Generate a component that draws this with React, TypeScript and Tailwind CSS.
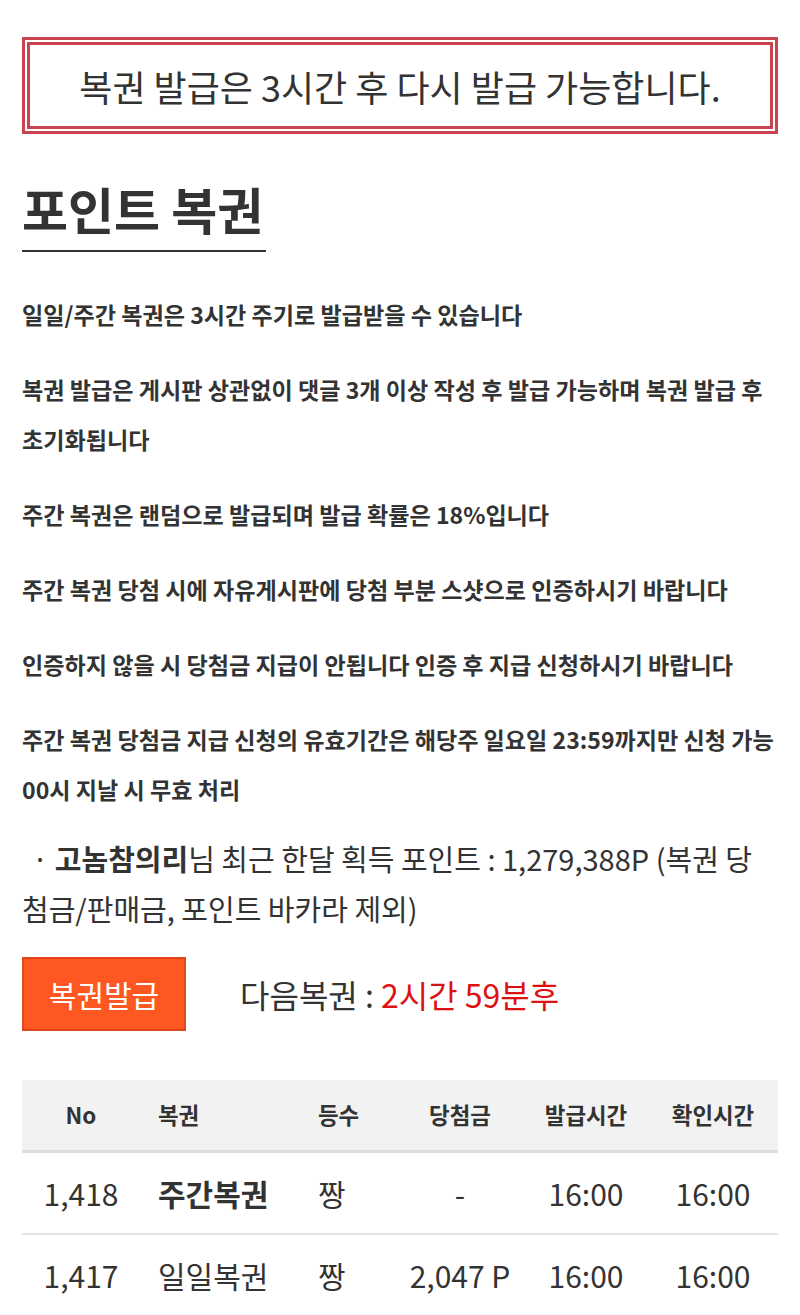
import React from 'react';

const font = { fontFamily: '"Noto Sans CJK KR", "Noto Sans", sans-serif' };

const rules: string[] = [
  '일일/주간 복권은 3시간 주기로 발급받을 수 있습니다',
  '복권 발급은 게시판 상관없이 댓글 3개 이상 작성 후 발급 가능하며 복권 발급 후 초기화됩니다',
  '주간 복권은 랜덤으로 발급되며 발급 확률은 18%입니다',
  '주간 복권 당첨 시에 자유게시판에 당첨 부분 스샷으로 인증하시기 바랍니다',
  '인증하지 않을 시 당첨금 지급이 안됩니다 인증 후 지급 신청하시기 바랍니다',
  '주간 복권 당첨금 지급 신청의 유효기간은 해당주 일요일 23:59까지만 신청 가능 00시 지날 시 무효 처리',
];

interface TicketRow {
  no: string;
  name: string;
  weekly: boolean;
  rank: string;
  prize: string;
  issued: string;
  checked: string;
}

const rows: TicketRow[] = [
  { no: '1,418', name: '주간복권', weekly: true, rank: '짱', prize: '-', issued: '16:00', checked: '16:00' },
  { no: '1,417', name: '일일복권', weekly: false, rank: '짱', prize: '2,047 P', issued: '16:00', checked: '16:00' },
];

const cols = 'grid grid-cols-[118px_160px_96px_128px_124px_130px] items-center';

export default function App() {
  return (
    <div className="min-h-[1315px] bg-white px-[22px] pt-[37px] text-[#333]" style={font}>
      <div className="flex h-[97px] items-center justify-center border-8 border-double border-[#c8434f] text-[36px]">
        복권 발급은 3시간 후 다시 발급 가능합니다.
      </div>

      <h1 className="mt-[39px] inline-block border-b-2 border-[#333] pb-[7px] pr-[3px] text-[50px] font-bold leading-[70px]">
        포인트 복권
      </h1>

      <div className="mt-[37px] flex flex-col gap-[25px]">
        {rules.map((r) => (
          <p key={r} className="text-[23.1px] font-bold leading-[50px]">
            {r}
          </p>
        ))}
      </div>

      <p className="mt-[19px] indent-[10px] text-[29px] leading-[50px]">
        · <b className="font-bold">고놈참의리</b>님 최근 한달 획득 포인트 : 1,279,388P (복권 당첨금/판매금, 포인트 바카라 제외)
      </p>

      <div className="mt-[24px] flex items-center gap-[54px]">
        <button
          type="button"
          className="h-[74px] w-[164px] border-2 border-[#e0481c] bg-[#ff5722] text-[30px] text-white"
        >
          복권발급
        </button>
        <div className="text-[32px]">
          다음복권 : <span className="text-[#dd1111]">2시간 59분후</span>
        </div>
      </div>

      <div className="mt-[49px]">
        <div className={`${cols} h-[73px] border-b-[3px] border-[#dddddd] bg-[#f2f2f2] text-[22.4px] font-bold`}>
          <div className="text-center">No</div>
          <div className="pl-[18px]">복권</div>
          <div className="pl-[18px]">등수</div>
          <div className="text-center">당첨금</div>
          <div className="text-center">발급시간</div>
          <div className="text-center">확인시간</div>
        </div>
        {rows.map((row) => (
          <div key={row.no} className={`${cols} h-[82px] border-b-2 border-[#e3e3e3] text-[30px]`}>
            <div className="text-center">{row.no}</div>
            <div className={`pl-[18px] ${row.weekly ? 'font-bold' : ''}`}>{row.name}</div>
            <div className="pl-[18px]">{row.rank}</div>
            <div className="text-center">{row.prize}</div>
            <div className="text-center">{row.issued}</div>
            <div className="text-center">{row.checked}</div>
          </div>
        ))}
      </div>
    </div>
  );
}
